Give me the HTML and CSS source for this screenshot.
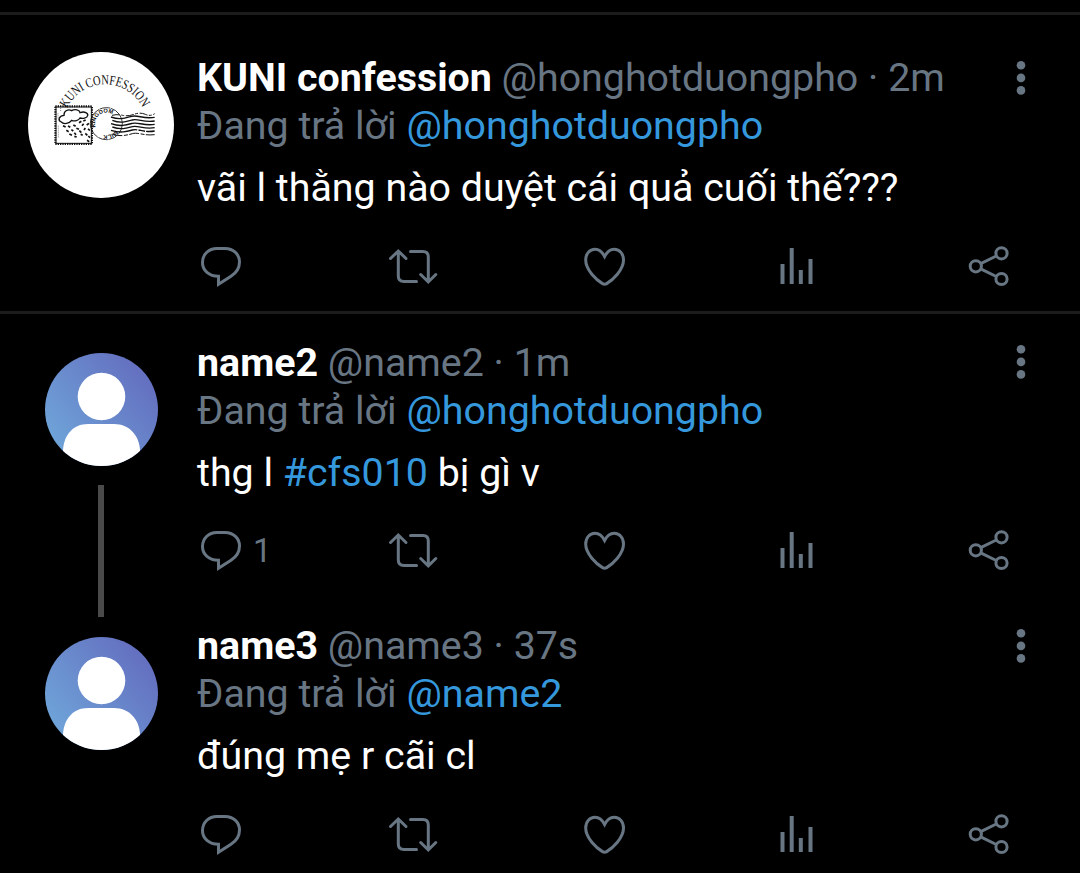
FILE: index.html
```html
<!DOCTYPE html>
<html lang="vi">
<head>
    <meta charset="UTF-8">
    <meta name="viewport" content="width=device-width, initial-scale=1.0">
    <title>KUNI confession</title>
    <link rel="stylesheet" href="styles.css">
</head>
<body>
    <!-- Shared icons -->
    <svg class="sprite" width="0" height="0">
        <defs>
            <linearGradient id="avatarBg" x1="0" y1="0.75" x2="0.8" y2="0.1">
                <stop offset="0" stop-color="#6fa5d9"/>
                <stop offset="1" stop-color="#6470c0"/>
            </linearGradient>
            <clipPath id="avatarClip"><circle cx="56.5" cy="56.5" r="56.5"/></clipPath>
        </defs>
        <symbol id="reply" viewBox="0 0 48 48">
            <path d="M20 6.500H28C36.500 6.500 42.500 12.500 42.500 20C42.500 26.500 39 31 34 34.300L21.500 42.300V34.300C12 34.300 5.500 28.500 5.500 20.500C5.500 12.500 11.500 6.500 20 6.500Z"/>
        </symbol>
        <symbol id="retweet" viewBox="0 0 48 48">
            <path d="M1.500 16.500L9.300 9L17 16.500M9.300 9V34C9.300 37.500 11.500 39.500 15 39.500H27.500M21.500 9.400H34C37.500 9.400 39.300 11.500 39.300 15V39.500M31.700 32.500L39.300 40L46.800 32.500" stroke-linecap="round"/>
        </symbol>
        <symbol id="heart" viewBox="0 0 48 48">
            <path d="M23.600 14.500C21 9.500 17.500 7.300 14 7.300C8.500 7.300 4.700 12 4.700 18C4.700 28 15.500 38 21.500 41.600Q23.600 42.800 25.700 41.600C31.700 38 42.500 28 42.500 18C42.500 12 38.700 7.300 33.200 7.300C29.700 7.300 26.200 9.500 23.600 14.500Z"/>
        </symbol>
        <symbol id="stats" viewBox="0 0 48 48">
            <path d="M9.500 22V42M18.700 6V42M27.800 28V42M37.500 17V42" stroke-width="4"/>
        </symbol>
        <symbol id="share" viewBox="0 0 48 48">
            <circle cx="10.800" cy="24.300" r="5.600"/>
            <circle cx="36.500" cy="11.300" r="5.600"/>
            <circle cx="36.500" cy="37" r="5.600"/>
            <path d="M15.700 21.700L31.300 14M15.700 26.900L31.300 34.500"/>
        </symbol>
        <symbol id="dots" viewBox="0 0 10 36">
            <circle cx="5" cy="5.200" r="4.300"/>
            <circle cx="5" cy="17.900" r="4.300"/>
            <circle cx="5" cy="30.400" r="4.300"/>
        </symbol>
        <symbol id="person" viewBox="0 0 113 113">
            <g clip-path="url(#avatarClip)">
                <rect width="113" height="113" fill="url(#avatarBg)"/>
                <circle cx="56.500" cy="43.500" r="23.800" fill="#fff"/>
                <path d="M18 113V97C19 82 28 71 43 71H69C84 71 94 82 95 97V113Z" fill="#fff"/>
            </g>
        </symbol>
    </svg>

    <main>
        <article class="tweet first">
            <div class="side">
                <svg class="logo" viewBox="24 21 438 438">
                    <circle cx="243" cy="240" r="219" fill="#fff"/>
                    <path id="titleArc" d="M141 190A126 126 0 0 1 370 193" fill="none"/>
                    <text class="logo-title"><textPath href="#titleArc" textLength="282" lengthAdjust="spacingAndGlyphs">KUNI CONFESSION</textPath></text>
                    <!-- stamp -->
                    <g fill="none" stroke="#111">
                        <rect x="108" y="186" width="106" height="109" stroke-width="3"/>
                        <rect x="106" y="184" width="110" height="113" stroke-width="6" stroke-dasharray="4 3"/>
                        <path d="M124 231C112 226 117 212 132 211C131 197 145 191 155 197C165 191 179 195 180 203C194 198 205 204 203 212C201 220 188 221 180 219C176 227 163 230 155 226C148 236 131 239 124 231Z" stroke-width="4"/>
                        <path d="M129 242l8 4M144 243l7 4M160 240l7 4M177 233l7 -4M190 228l7 -3M139 256l7 4M154 254l6 4M169 250l8 3M186 242l5 -6M200 240l7 -5M148 267l8 4M163 263l5 6M178 257l6 6M192 255l4 -6M204 252l6 4M163 274l7 2M182 268l6 3M196 265l6 6M205 273l5 5M201 286l7 4" stroke-width="5"/>
                        <path d="M122 189v11M114 205v15M115 242v37" stroke-width="1.500" stroke-dasharray="3 3"/>
                    </g>
                    <!-- postmark -->
                    <circle cx="259" cy="236" r="48" fill="none" stroke="#111" stroke-width="2.500" stroke-dasharray="32 2"/>
                    <path id="markArc" d="M227 247A33 33 0 1 1 291 226A33 33 0 1 1 227 247" fill="none"/>
                    <text class="mark-text"><textPath href="#markArc">KINGDOM<tspan dx="54">MILK</tspan></textPath></text>
                    <!-- cancel waves -->
                    <g fill="none" stroke="#111" stroke-width="4">
                        <path d="M276 211Q292 207 308 211T342 208T376 208T404 206" stroke-dasharray="24 4 9 5" stroke-width="3"/>
                        <path d="M273 216C300 226 316 219 335 214S370 223 404 217"/>
                        <path d="M277 226C302 236 320 230 337 225S372 234 404 228"/>
                        <path d="M273 236C302 246 320 240 337 235S372 244 404 238"/>
                        <path d="M277 246C302 255 320 250 337 245S372 254 404 248"/>
                        <path d="M273 256C302 265 320 260 337 255S372 264 404 258" stroke-dasharray="80 4 20 3"/>
                        <path d="M277 268C302 275 320 271 337 266S372 273 404 269" stroke-dasharray="30 5 12 4" stroke-width="3"/>
                    </g>
                </svg>
            </div>
            <div class="content">
                <div class="header">
                    <p><strong>KUNI confession</strong> @honghotduongpho · 2m</p>
                    <svg class="more"><use href="#dots"/></svg>
                </div>
                <p class="replying">Đang trả lời <a>@honghotduongpho</a></p>
                <p class="text">vãi l thằng nào duyệt cái quả cuối thế???</p>
                <div class="actions">
                    <span><svg><use href="#reply"/></svg></span>
                    <span><svg><use href="#retweet"/></svg></span>
                    <span><svg><use href="#heart"/></svg></span>
                    <span><svg><use href="#stats"/></svg></span>
                    <span><svg><use href="#share"/></svg></span>
                </div>
            </div>
        </article>

        <article class="tweet second">
            <div class="side">
                <svg class="avatar"><use href="#person"/></svg>
                <div class="thread-line"></div>
            </div>
            <div class="content">
                <div class="header">
                    <p><strong>name2</strong> @name2 · 1m</p>
                    <svg class="more"><use href="#dots"/></svg>
                </div>
                <p class="replying">Đang trả lời <a>@honghotduongpho</a></p>
                <p class="text">thg l <a>#cfs010</a> bị gì v</p>
                <div class="actions">
                    <span><svg><use href="#reply"/></svg>1</span>
                    <span><svg><use href="#retweet"/></svg></span>
                    <span><svg><use href="#heart"/></svg></span>
                    <span><svg><use href="#stats"/></svg></span>
                    <span><svg><use href="#share"/></svg></span>
                </div>
            </div>
        </article>

        <article class="tweet third">
            <div class="side">
                <svg class="avatar"><use href="#person"/></svg>
            </div>
            <div class="content">
                <div class="header">
                    <p><strong>name3</strong> @name3 · 37s</p>
                    <svg class="more"><use href="#dots"/></svg>
                </div>
                <p class="replying">Đang trả lời <a>@name2</a></p>
                <p class="text">đúng mẹ r cãi cl</p>
                <div class="actions">
                    <span><svg><use href="#reply"/></svg></span>
                    <span><svg><use href="#retweet"/></svg></span>
                    <span><svg><use href="#heart"/></svg></span>
                    <span><svg><use href="#stats"/></svg></span>
                    <span><svg><use href="#share"/></svg></span>
                </div>
            </div>
        </article>
    </main>
</body>
</html>
```
FILE: styles.css
```css
body {
    margin: 0;
    background-color: #000;
    color: #687684;
    font-family: Roboto, "Noto Sans", sans-serif;
    font-size: 39.36px;
    line-height: 48px;
    overflow: hidden;
}

.sprite {
    display: block;
}

symbol {
    overflow: visible;
}

main {
    padding-top: 12px;
}

p {
    margin: 0;
    white-space: nowrap;
}

a {
    color: #3598dc;
}

strong {
    color: #fff;
    font-weight: 700;
}

.tweet {
    display: flex;
    box-sizing: border-box;
}

.first {
    height: 299px;
    padding-top: 39px;
    border-top: 3px solid #1c1c1c;
}

.second {
    height: 311px;
    padding-top: 25px;
    border-top: 3px solid #1c1c1c;
}

.side {
    width: 197px;
    flex-shrink: 0;
    display: flex;
    flex-direction: column;
    align-items: center;
    box-sizing: border-box;
    padding: 14px 0 0 5px;
}

.first .side {
    padding-top: 0;
    margin-top: -2px;
}

.third .side {
    padding-top: 15px;
}

.logo {
    width: 146px;
    height: 146px;
}

.avatar {
    width: 113px;
    height: 113px;
}

.thread-line {
    width: 6px;
    height: 132px;
    flex-shrink: 0;
    margin-top: 19px;
    background-color: #4a4a4a;
}

.logo-title {
    font-family: "Liberation Serif", serif;
    font-size: 41px;
    fill: #111;
}

.mark-text {
    font-family: "Liberation Sans", sans-serif;
    font-size: 17px;
    font-weight: bold;
    fill: #111;
}

.content {
    flex: 1;
}

.header {
    display: flex;
    justify-content: space-between;
    height: 48px;
}

.more {
    width: 10px;
    height: 36px;
    margin: 6px 54px 0 0;
    fill: #687684;
}

.second .more {
    margin-top: 5px;
}

.text {
    margin-top: 14px;
    color: #fff;
}

.actions {
    display: flex;
    justify-content: space-between;
    width: 816px;
    height: 48px;
    margin-top: 30px;
}

.second .actions {
    margin-top: 29px;
}

.actions span {
    display: flex;
    width: 48px;
    gap: 8px;
    font-size: 33px;
    line-height: 50px;
}

.actions svg {
    width: 48px;
    height: 48px;
    flex-shrink: 0;
    fill: none;
    stroke: #687684;
    stroke-width: 3;
    overflow: visible;
}
```
